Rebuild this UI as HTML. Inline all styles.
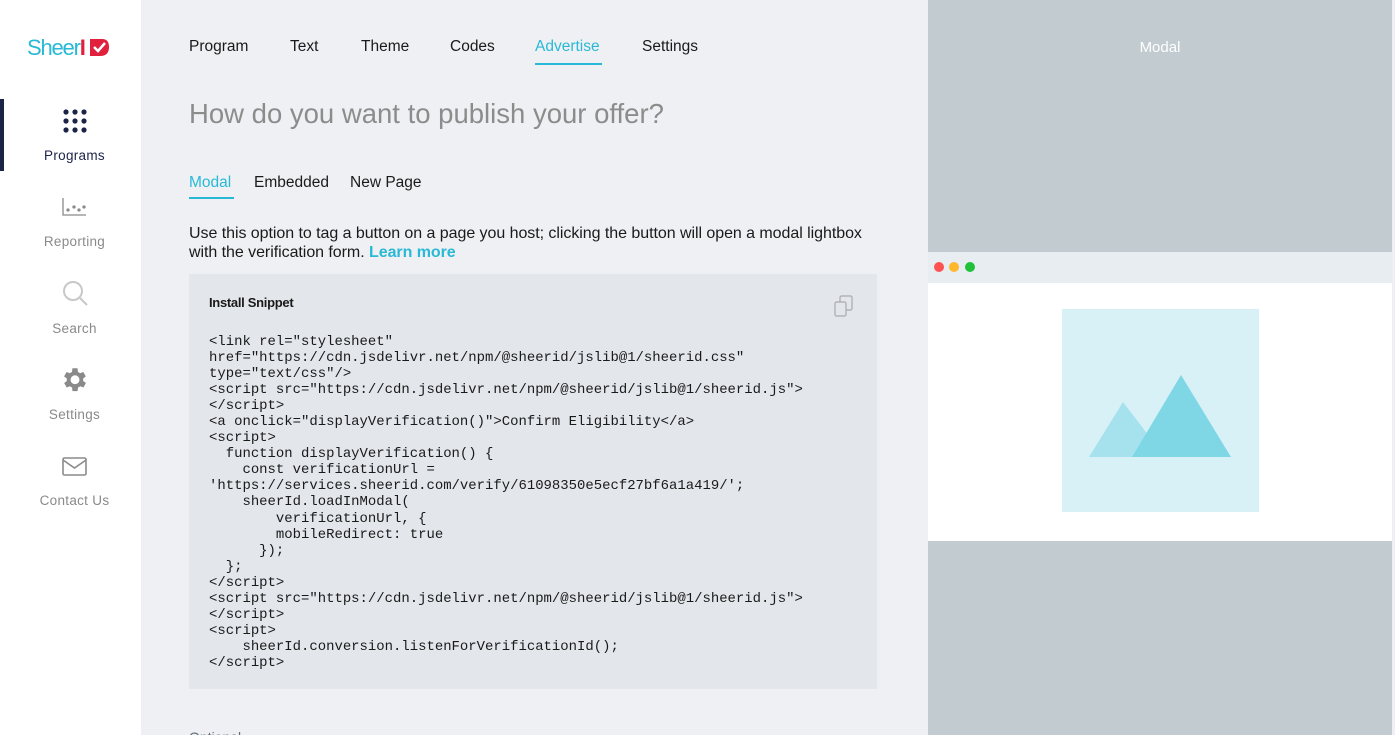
<!DOCTYPE html>
<html style="overflow:hidden;height:735px"><head><style>
*{margin:0;padding:0;box-sizing:border-box}
body{width:1395px;height:735px;overflow:hidden;background:#eff0f4;font-family:"Liberation Sans",sans-serif;position:relative}
.a{position:absolute;white-space:nowrap}
.side{position:absolute;left:0;top:0;width:141px;height:735px;background:#fff}
.nl{position:absolute;width:149px;text-align:center;font-size:13.5px;color:#8a8a8a;letter-spacing:.3px}
.tab{position:absolute;top:38px;font-size:15.5px;color:#1a1a1a}
pre{position:absolute;left:209px;top:334px;font-family:"Liberation Mono",monospace;font-size:13.95px;line-height:16.05px;color:#1a1a1a}
</style></head><body>
<div class="side">
  <div class="a" style="left:27px;top:35px;font-size:22px;letter-spacing:-1.2px;color:#29b9d6">Sheer<span style="color:#e0203c;font-weight:bold">I</span></div>
  <svg class="a" style="left:89px;top:39px" width="22" height="18" viewBox="0 0 20 18"><path d="M0 0H12Q19 0 19 8Q19 17 10 17H0Z" fill="#e0203c"/><path d="M4 8L8 12L15 4" stroke="#fff" stroke-width="2.5" fill="none"/></svg>
  <div class="a" style="left:0;top:99px;width:4px;height:72px;background:#1b2447"></div>
  <svg class="a" style="left:62px;top:109px" width="26" height="26" viewBox="0 0 26 26" fill="#1b2447">
    <circle cx="4" cy="3" r="2.6"/><circle cx="13" cy="3" r="2.6"/><circle cx="22" cy="3" r="2.6"/>
    <circle cx="4" cy="12" r="2.6"/><circle cx="13" cy="12" r="2.6"/><circle cx="22" cy="12" r="2.6"/>
    <circle cx="4" cy="21" r="2.6"/><circle cx="13" cy="21" r="2.6"/><circle cx="22" cy="21" r="2.6"/>
  </svg>
  <div class="nl" style="top:148px;color:#1b2447">Programs</div>
  <svg class="a" style="left:62px;top:197px" width="26" height="22" viewBox="0 0 26 22" fill="none" stroke="#8a8a8a" stroke-width="1.3">
    <path d="M1 1V18H24"/><circle cx="6" cy="13" r="1" fill="#8a8a8a"/><circle cx="12" cy="10" r="1" fill="#8a8a8a"/><circle cx="17" cy="13" r="1" fill="#8a8a8a"/><circle cx="22" cy="10" r="1" fill="#8a8a8a"/>
  </svg>
  <div class="nl" style="top:234px">Reporting</div>
  <svg class="a" style="left:62px;top:280px" width="28" height="28" viewBox="0 0 28 28" fill="none" stroke="#c8c8c8" stroke-width="2">
    <circle cx="11" cy="11" r="9"/><path d="M18 18L25 25"/>
  </svg>
  <div class="nl" style="top:321px">Search</div>
  <svg class="a" style="left:61px;top:367px" width="28" height="28" viewBox="2 2 22 22" fill="#8a8a8a">
    <path d="M19.4 13a7.5 7.5 0 000-2l2.1-1.6-2-3.5-2.5 1a7 7 0 00-1.7-1L15 3h-4l-.4 2.9a7 7 0 00-1.7 1l-2.5-1-2 3.5L6.6 11a7.5 7.5 0 000 2l-2.1 1.6 2 3.5 2.5-1a7 7 0 001.7 1L11 21h4l.4-2.9a7 7 0 001.7-1l2.5 1 2-3.5zM13 15.5a3.5 3.5 0 110-7 3.5 3.5 0 010 7z"/>
  </svg>
  <div class="nl" style="top:407px">Settings</div>
  <svg class="a" style="left:62px;top:456px" width="26" height="22" viewBox="0 0 26 22" fill="none" stroke="#8a8a8a" stroke-width="1.6">
    <rect x="1" y="2" width="23" height="17" rx="1.5"/><path d="M1 4L12.5 12L24 4"/>
  </svg>
  <div class="nl" style="top:493px">Contact Us</div>
</div>

<div class="tab" style="left:189px">Program</div>
<div class="tab" style="left:290px">Text</div>
<div class="tab" style="left:361px">Theme</div>
<div class="tab" style="left:450px">Codes</div>
<div class="tab" style="left:535px;color:#29b9d6">Advertise</div>
<div class="a" style="left:535px;top:63px;width:67px;height:2px;background:#29b9d6"></div>
<div class="tab" style="left:642px">Settings</div>

<div class="a" style="left:189px;top:98px;font-size:27.5px;color:#8c8c8c">How do you want to publish your offer?</div>

<div class="a" style="left:189px;top:174px;font-size:15.5px;color:#29b9d6">Modal</div>
<div class="a" style="left:189px;top:197px;width:45px;height:1.5px;background:#29b9d6"></div>
<div class="a" style="left:254px;top:174px;font-size:15.5px;color:#1a1a1a">Embedded</div>
<div class="a" style="left:350px;top:174px;font-size:15.5px;color:#1a1a1a">New Page</div>

<div class="a" style="left:189px;top:224px;font-size:16px;line-height:19px;color:#1a1a1a;letter-spacing:-.05px">Use this option to tag a button on a page you host; clicking the button will open a modal lightbox<br>with the verification form. <b style="color:#29b9d6">Learn more</b></div>

<div class="a" style="left:189px;top:274px;width:688px;height:415px;background:#e3e6ea"></div>
<div class="a" style="left:209px;top:295px;font-size:13px;font-weight:bold;color:#1a1a1a;letter-spacing:-.3px">Install Snippet</div>
<svg class="a" style="left:834px;top:295px" width="20" height="22" viewBox="0 0 20 22" fill="none" stroke="#aaa" stroke-width="1.2">
  <rect x="1" y="7" width="11" height="14" rx="1.5"/><path d="M6 7V2.5A1.5 1.5 0 017.5 1h9A1.5 1.5 0 0118 2.5v11a1.5 1.5 0 01-1.5 1.5H12"/>
</svg>
<pre>&lt;link rel="stylesheet"
href="https://cdn.jsdelivr.net/npm/@sheerid/jslib@1/sheerid.css"
type="text/css"/&gt;
&lt;script src="https://cdn.jsdelivr.net/npm/@sheerid/jslib@1/sheerid.js"&gt;
&lt;/script&gt;
&lt;a onclick="displayVerification()"&gt;Confirm Eligibility&lt;/a&gt;
&lt;script&gt;
  function displayVerification() {
    const verificationUrl =
'https://services.sheerid.com/verify/61098350e5ecf27bf6a1a419/';
    sheerId.loadInModal(
        verificationUrl, {
        mobileRedirect: true
      });
  };
&lt;/script&gt;
&lt;script src="https://cdn.jsdelivr.net/npm/@sheerid/jslib@1/sheerid.js"&gt;
&lt;/script&gt;
&lt;script&gt;
    sheerId.conversion.listenForVerificationId();
&lt;/script&gt;</pre>
<div class="a" style="left:189px;top:729px;height:6px;overflow:hidden;font-size:14px;line-height:16px;color:#5a6b7a">Optional</div>

<div class="a" style="left:928px;top:0;width:464px;height:735px;background:#c1cbd0"></div>
<div class="a" style="left:928px;top:39px;width:464px;text-align:center;font-size:15px;color:#fff">Modal</div>
<div class="a" style="left:928px;top:252px;width:464px;height:31px;background:#e7edf0"></div>
<div class="a" style="left:934px;top:262px;width:10px;height:10px;border-radius:50%;background:#fe5250"></div>
<div class="a" style="left:949px;top:262px;width:10px;height:10px;border-radius:50%;background:#ffb72b"></div>
<div class="a" style="left:965px;top:262px;width:10px;height:10px;border-radius:50%;background:#20c139"></div>
<div class="a" style="left:928px;top:283px;width:464px;height:258px;background:#fff"></div>
<svg class="a" style="left:1062px;top:309px" width="197" height="203" viewBox="0 0 197 203">
  <rect width="197" height="203" fill="#d8f1f6"/>
  <path d="M27 148L61 93L103 148Z" fill="#a5e2ed"/>
  <path d="M70 148L119 66L169 148Z" fill="#7fd7e6"/>
</svg>
</body></html>
